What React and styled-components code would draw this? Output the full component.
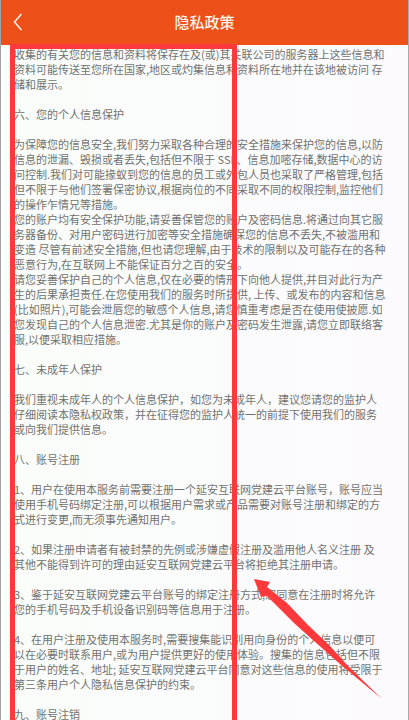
import React from "react";
import styled, { createGlobalStyle } from "styled-components";

const GlobalStyle = createGlobalStyle`
  *, *::before, *::after { box-sizing: border-box; }
  html {
    background: #fbfcfb;
    scrollbar-width: none;
  }
  body {
    margin: 0;
    font-family: "Noto Sans CJK SC", "Noto Sans", sans-serif;
  }
`;

const Screen = styled.div`
  position: relative;
  min-height: 100vh;
  background: linear-gradient(90deg, #fafdfa, #fcfafe);
  border-left: 1px solid #a3a3a3;
  border-right: 1px solid #a9a9ab;
`;

const Header = styled.header`
  display: grid;
  grid-template-columns: 36px 1fr 36px;
  align-items: center;
  height: 45px;
  background: #ee5019;
  color: #fff3ea;
`;

const BackButton = styled.button`
  display: flex;
  align-items: center;
  justify-content: center;
  height: 45px;
  padding: 0 2px 2px 0;
  border: 0;
  background: none;
  color: inherit;
`;

const Title = styled.h1`
  margin: 0;
  padding-bottom: 2px;
  font-size: 15px;
  font-weight: 500;
  line-height: 20px;
  text-align: center;
`;

const Policy = styled.main`
  display: flex;
  flex-direction: column;
  gap: 15px;
  padding: 2px 12px 0 13px;
  color: #707270;
  font-size: 11px;
  line-height: 15px;
`;

const Heading = styled.h2`
  margin: 0;
  font-size: 11px;
  font-weight: 400;
  line-height: 15px;
`;

const Paragraph = styled.p`
  margin: 0;
  white-space: pre;
`;

const Frame = styled.div`
  position: absolute;
  top: 44px;
  bottom: 0;
  left: 9px;
  width: 227px;
  border: 5px solid #fd393b;
  border-bottom: 0;
  pointer-events: none;
`;

const Arrow = styled.svg`
  position: absolute;
  top: 578px;
  left: 251px;
  pointer-events: none;
`;

const sections = [
  {
    paragraphs: [
      [
        "收集的有关您的信息和资料将保存在及(或)其关联公司的服务器上这些信息和",
        "资料可能传送至您所在国家,地区或灼集信息和资料所在地并在该地被访问 存",
        "储和展示。",
      ],
    ],
  },
  {
    title: "六、您的个人信息保护",
    paragraphs: [
      [
        "为保障您的信息安全,我们努力采取各种合理的安全措施来保护您的信息,以防",
        "信息的泄漏、毁损或者丢失,包括但不限于 SSL、信息加嘧存储,数据中心的访",
        "问控制.我们对可能掾蚁到您的信息的员工或外包人员也采取了严格管理,包括",
        "但不限于与他们签署保密协议,根据岗位的不同采取不同的权限控制,监控他们",
        "的操作乍情兄等措施。",
        "您的账户均有安全保护功能,请妥善保管您的账户及密码信息.将通过向其它服",
        "务器备份、对用户密码进行加密等安全措施确保您的信息不丢失,不被滥用和",
        "变造 尽管有前述安全措施,但也请您理解,由于技术的限制以及可能存在的各种",
        "恶意行为,在互联网上不能保证百分之百的安全。",
        "请您妥善保护自己的个人信息,仅在必要的情形下向他人提供,并目对此行为产",
        "生的后果承担责任.在您使用我们的服务时所提供, 上传、或发布的内容和信息",
        "(比如照片),可能会泄唇您的敏感个人信息,请您慎重考虑是否在使用使披愿.如",
        "您发现自己的个人信息泄密.尤其是你的账户及密码发生泄露,请您立即联络客",
        "服,以便采取相应措施。",
      ],
    ],
  },
  {
    title: "七、未成年人保护",
    paragraphs: [
      [
        "我们重视未成年人的个人信息保护，如您为未成年人，建议您请您的监护人",
        "仔细阅读本隐私权政策，并在征得您的监护人统一的前提下使用我们的服务",
        "或向我们提供信息。",
      ],
    ],
  },
  {
    title: "八、账号注册",
    paragraphs: [
      [
        "1、用户在使用本服务前需要注册一个延安互联网党建云平台账号，账号应当",
        "使用手机号码绑定注册,可以根据用户需求或产品需要对账号注册和绑定的方",
        "式进行变更,而无须事先通知用户。",
      ],
      [
        "2、如果注册申请者有被封禁的先例或涉嫌虚假注册及滥用他人名义注册 及",
        "其他不能得到许可的理由延安互联网党建云平台将拒绝其注册申请。",
      ],
      [
        "3、鉴于延安互联网党建云平台账号的绑定注册方式,您同意在注册时将允许",
        "您的手机号码及手机设备识别码等信息用于注册。",
      ],
      [
        "4、在用户注册及使用本服务时,需要搜集能识别用向身份的个人信息以便可",
        "以在必要时联系用户,或为用户提供更好的使用体验。搜集的信息包括但不限",
        "于用户的姓名、地址; 延安互联网党建云平台同意对这些信息的使用将受限于",
        "第三条用户个人隐私信息保护的约束。",
      ],
    ],
  },
  { title: "九、账号注销", paragraphs: [] },
];

export default function App() {
  return (
    <>
      <GlobalStyle />
      <Screen>
        <Header>
          <BackButton type="button" aria-label="返回">
            <svg width="10" height="18" viewBox="0 0 10 18" fill="none" stroke="currentColor" strokeWidth="1.5">
              <path d="M8.5 1 1.5 9l7 8" />
            </svg>
          </BackButton>
          <Title>隐私政策</Title>
        </Header>
        <Policy>
          {sections.map(({ title, paragraphs }, index) => (
            <React.Fragment key={index}>
              {title && <Heading>{title}</Heading>}
              {paragraphs.map((lines) => (
                <Paragraph key={lines[0]}>{lines.join("\n")}</Paragraph>
              ))}
            </React.Fragment>
          ))}
        </Policy>
        <Frame />
        <Arrow width="131" height="123" viewBox="0 0 131 123" aria-hidden="true">
          <path
            d="M2 1 18 4 15 9 35 25 56 47 78 68 96 88 130 121 88 86 62 63 43 46 22 25 15 18 9 19Z"
            fill="#fd393b"
          />
        </Arrow>
      </Screen>
    </>
  );
}
